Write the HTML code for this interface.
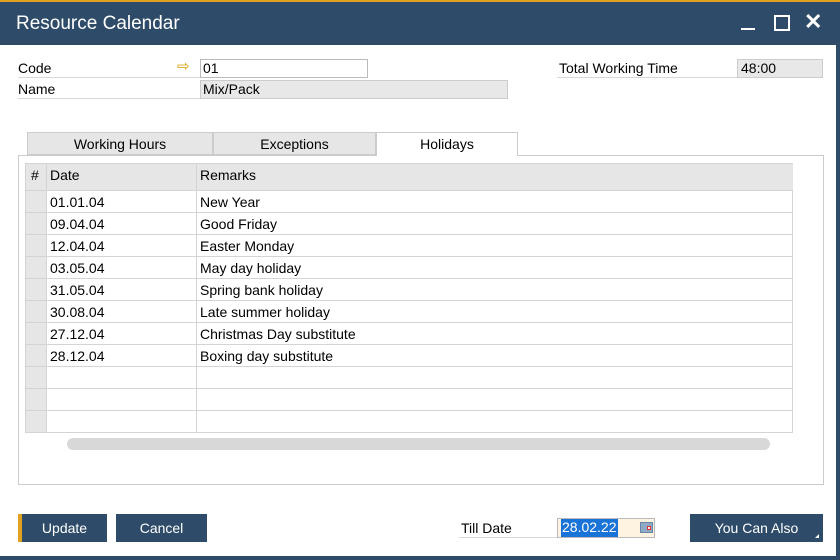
<!DOCTYPE html>
<html><head><style>
*{margin:0;padding:0;box-sizing:border-box}
body{width:840px;height:560px;background:#fff;font-family:"Liberation Sans",sans-serif;font-size:14px;color:#000;position:relative;overflow:hidden}
.a{position:absolute}
.lbl{border-bottom:1px solid #d8d8d8}
td{border-right:1px solid #d4d4d4;border-bottom:1px solid #d4d4d4;height:22px;padding-left:3px;font-size:14px}
</style></head><body>
<div class="a" style="left:0;top:0;width:840px;height:2px;background:#e0a020"></div>
<div class="a" style="left:0;top:2px;width:840px;height:43px;background:#2e4c69"></div>
<div class="a" style="left:16px;top:13px;color:#fff;font-size:19px">Resource Calendar</div>
<div class="a" style="left:741px;top:28px;width:14px;height:2px;background:#fff"></div>
<div class="a" style="left:774px;top:15px;width:16px;height:16px;border:2px solid #fff"></div>
<div class="a" style="left:804px;top:9px;color:#fff;font-size:22px;font-weight:bold">✕</div>
<div class="a" style="left:836px;top:45px;width:4px;height:515px;background:#2e4c69"></div>
<div class="a" style="left:0;top:556px;width:840px;height:4px;background:#2e4c69"></div>

<div class="a lbl" style="left:18px;top:60px;width:182px;height:18px">Code</div>
<div class="a" style="left:177px;top:57px;color:#d9a000;font-size:15px">⇨</div>
<div class="a" style="left:200px;top:59px;width:168px;height:19px;border:1px solid #bbb;padding-left:2px">01</div>
<div class="a lbl" style="left:18px;top:81px;width:182px;height:18px">Name</div>
<div class="a" style="left:200px;top:80px;width:308px;height:19px;background:#e8e8e8;border:1px solid #ccc;padding-left:2px">Mix/Pack</div>
<div class="a lbl" style="left:557px;top:60px;width:180px;height:18px;padding-left:2px">Total Working Time</div>
<div class="a" style="left:737px;top:59px;width:86px;height:19px;background:#e8e8e8;border:1px solid #ccc;padding-left:3px">48:00</div>

<div class="a" style="left:27px;top:132px;width:186px;height:23px;background:#e6e6e6;border:1px solid #ccc;text-align:center;padding-top:3px">Working Hours</div>
<div class="a" style="left:213px;top:132px;width:163px;height:23px;background:#e6e6e6;border:1px solid #ccc;text-align:center;padding-top:3px">Exceptions</div>
<div class="a" style="left:376px;top:132px;width:142px;height:24px;background:#fff;border:1px solid #ccc;border-bottom:none;text-align:center;padding-top:3px;z-index:2">Holidays</div>
<div class="a" style="left:18px;top:155px;width:806px;height:330px;border:1px solid #ccc"></div>

<table class="a" style="left:25px;top:163px;width:768px;border-collapse:collapse;border-left:1px solid #d4d4d4;border-top:1px solid #d4d4d4">
<tr style="background:#e6e6e6"><td style="width:21px;height:27px;padding-left:5px;vertical-align:top;padding-top:3px">#</td><td style="width:150px;vertical-align:top;padding-top:3px">Date</td><td style="vertical-align:top;padding-top:3px;border-right:none">Remarks</td></tr>
<tr><td style="background:#e6e6e6"></td><td>01.01.04</td><td>New Year</td></tr>
<tr><td style="background:#e6e6e6"></td><td>09.04.04</td><td>Good Friday</td></tr>
<tr><td style="background:#e6e6e6"></td><td>12.04.04</td><td>Easter Monday</td></tr>
<tr><td style="background:#e6e6e6"></td><td>03.05.04</td><td>May day holiday</td></tr>
<tr><td style="background:#e6e6e6"></td><td>31.05.04</td><td>Spring bank holiday</td></tr>
<tr><td style="background:#e6e6e6"></td><td>30.08.04</td><td>Late summer holiday</td></tr>
<tr><td style="background:#e6e6e6"></td><td>27.12.04</td><td>Christmas Day substitute</td></tr>
<tr><td style="background:#e6e6e6"></td><td>28.12.04</td><td>Boxing day substitute</td></tr>
<tr><td style="background:#e6e6e6"></td><td></td><td></td></tr>
<tr><td style="background:#e6e6e6"></td><td></td><td></td></tr>
<tr><td style="background:#e6e6e6"></td><td></td><td></td></tr>
</table>
<div class="a" style="left:67px;top:438px;width:703px;height:12px;background:#d8d8d8;border-radius:6px"></div>

<div class="a" style="left:18px;top:514px;width:89px;height:28px;background:#2e4c69;border-left:4px solid #e0a020;color:#fff;text-align:center;padding-top:6px">Update</div>
<div class="a" style="left:116px;top:514px;width:91px;height:28px;background:#2e4c69;color:#fff;text-align:center;padding-top:6px">Cancel</div>
<div class="a lbl" style="left:459px;top:520px;width:98px;height:18px;padding-left:2px">Till Date</div>
<div class="a" style="left:557px;top:518px;width:98px;height:20px;background:#fdf3e0;border:1px solid #bbb"></div>
<div class="a" style="left:561px;top:519px;height:18px;background:#1a73d6;color:#fff;padding:0 1px">28.02.22</div>
<div class="a" style="left:640px;top:522px;width:13px;height:11px;background:#8fa9c6;border:1px solid #6a86a6"><div style="margin:3px 0 0 6px;width:4px;height:4px;background:#fff;border:1px solid #d33"></div></div>
<div class="a" style="left:690px;top:514px;width:133px;height:28px;background:#2e4c69;color:#fff;text-align:center;padding-top:6px">You Can Also</div>
<div class="a" style="left:815px;top:534px;width:0;height:0;border-left:4px solid transparent;border-bottom:4px solid #fff"></div>
</body></html>
